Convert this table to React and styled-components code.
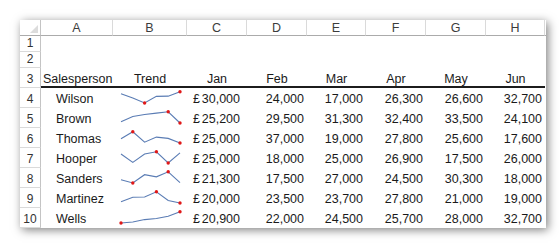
import React from 'react';
import styled, { createGlobalStyle } from 'styled-components';

const months = ['Jan', 'Feb', 'Mar', 'Apr', 'May', 'Jun'];
const letters = ['A', 'B', 'C', 'D', 'E', 'F', 'G', 'H'];

const sales = [
  { name: 'Wilson', values: [30000, 24000, 17000, 26300, 26600, 32700] },
  { name: 'Brown', values: [25200, 29500, 31300, 32400, 33500, 24100] },
  { name: 'Thomas', values: [25000, 37000, 19000, 27800, 25600, 17600] },
  { name: 'Hooper', values: [25000, 18000, 25000, 26900, 17500, 26000] },
  { name: 'Sanders', values: [21300, 17500, 27000, 24500, 30300, 18000] },
  { name: 'Martinez', values: [20000, 23500, 23700, 27800, 21000, 19000] },
  { name: 'Wells', values: [20900, 22000, 24500, 25700, 28000, 32700] },
];

const fmt = (n) => n.toLocaleString('en-US');

const Sparkline = ({ values }) => {
  const min = Math.min(...values);
  const max = Math.max(...values);
  const pts = values.map((v, i) => [8 + i * 11.8, 15 - ((v - min) / (max - min)) * 11.2]);
  const hi = pts[values.indexOf(max)];
  const lo = pts[values.indexOf(min)];

  return (
    <svg width='74' height='20' viewBox='0 0 74 20'>
      <polyline points={pts.map((p) => p.join(',')).join(' ')} fill='none' stroke='#5a7cb4' strokeWidth='1.1' />
      <circle cx={hi[0]} cy={hi[1]} r='1.7' fill='#e01818' />
      <circle cx={lo[0]} cy={lo[1]} r='1.7' fill='#e01818' />
    </svg>
  );
};

export default function App() {
  return (
    <>
      <GlobalStyle />
      <Page>
        <Frame>
          <Sheet>
            <Corner />
            {letters.map((l) => (
              <ColHead key={l}>{l}</ColHead>
            ))}
            <ColHead />

            {[1, 2].map((r) => (
              <React.Fragment key={r}>
                <RowHead>{r}</RowHead>
                {letters.map((l) => (
                  <Cell key={l} />
                ))}
                <Cell />
              </React.Fragment>
            ))}

            <RowHead>3</RowHead>
            <Cell $title $pad='0 0 0 2px'>Salesperson</Cell>
            <Cell $title $align='center'>Trend</Cell>
            {months.map((m) => (
              <Cell key={m} $title $align='center'>
                {m}
              </Cell>
            ))}
            <Cell />

            {sales.map((row, i) => (
              <React.Fragment key={row.name}>
                <RowHead>{i + 4}</RowHead>
                <Cell $pad='0 0 0 15px'>{row.name}</Cell>
                <SparkCell>
                  <Sparkline values={row.values} />
                </SparkCell>
                <Cell $align='space-between' $pad='0 7px 0 6px'>
                  <span>£</span>
                  <span>{fmt(row.values[0])}</span>
                </Cell>
                {row.values.slice(1).map((v, j) => (
                  <Cell key={j} $align='flex-end' $pad='0 3px 0 0'>
                    {fmt(v)}
                  </Cell>
                ))}
                <Cell />
              </React.Fragment>
            ))}
          </Sheet>
        </Frame>
      </Page>
    </>
  );
}

const GlobalStyle = createGlobalStyle`
  html, body {
    margin: 0;
    background: #ffffff;
  }
  body {
    font-family: "Liberation Sans", Arial, sans-serif;
  }
`;

const Page = styled.div`
  width: 559px;
  height: 249px;
  padding: 20px 0 0 20px;
  box-sizing: border-box;
  background: #ffffff;
`;

const Frame = styled.div`
  width: 526px;
  height: 208px;
  overflow: hidden;
  background: #ffffff;
  box-shadow: 2px 2px 9px rgba(0, 0, 0, 0.5);
`;

const Sheet = styled.div`
  display: grid;
  grid-template-columns: 21px 72px 74px 60px 60px 59px 60px 60px 59px 10px;
  grid-template-rows: 16px 16px 16px repeat(8, 20px);
  font-size: 12.5px;
  color: #1a1a1a;
`;

const Corner = styled.div`
  position: relative;
  box-sizing: border-box;
  border-right: 1px solid #c4c4c4;
  border-bottom: 1px solid #ababab;

  &::after {
    content: '';
    position: absolute;
    right: 2px;
    bottom: 2px;
    border-style: solid;
    border-width: 0 0 8px 8px;
    border-color: transparent transparent #dcdcdc transparent;
  }
`;

const ColHead = styled.div`
  box-sizing: border-box;
  display: flex;
  align-items: center;
  justify-content: center;
  border-right: 1px solid #dadada;
  border-bottom: 1px solid #ababab;
  font-size: 12.5px;
  color: #3c3c3c;
`;

const RowHead = styled.div`
  box-sizing: border-box;
  display: flex;
  align-items: flex-end;
  justify-content: center;
  padding-bottom: 1px;
  border-right: 1px solid #c4c4c4;
  border-bottom: 1px solid #dadada;
  font-size: 12px;
  color: #333333;
`;

const Cell = styled.div`
  box-sizing: border-box;
  display: flex;
  align-items: flex-end;
  justify-content: ${(p) => p.$align || 'flex-start'};
  padding: ${(p) => p.$pad || '0'};
  padding-bottom: ${(p) => (p.$title ? '0' : '2px')};
  border-bottom: ${(p) => (p.$title ? '2px solid #1c1c1c' : 'none')};
  white-space: nowrap;
`;

const SparkCell = styled.div`
  display: flex;
  align-items: stretch;
`;
